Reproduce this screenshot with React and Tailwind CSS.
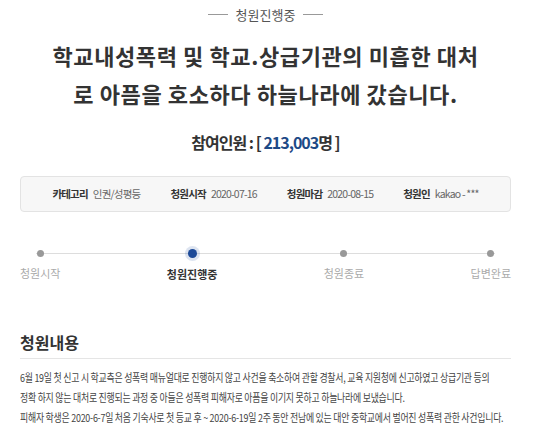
const font = { fontFamily: '"Noto Sans CJK KR", "Noto Sans", sans-serif' };

const info = [
  ["카테고리", "인권/성평등"],
  ["청원시작", "2020-07-16"],
  ["청원마감", "2020-08-15"],
  ["청원인", "kakao - ***"],
];

const steps = ["청원시작", "청원진행중", "청원종료", "답변완료"];

export default function App() {
  return (
    <div className="h-[430px] w-[559px] overflow-hidden bg-white" style={font}>
      <div className="ml-[20px] w-[491px]">
        <div className="flex items-center justify-center gap-2 pt-[5px] text-[13px] text-[#555]">
          <span className="h-px w-[20px] bg-[#999]" />
          <span>청원진행중</span>
          <span className="h-px w-[20px] bg-[#999]" />
        </div>

        <h1 className="mt-[11px] whitespace-nowrap text-center text-[22px] font-bold leading-[38px] tracking-[0.6px] text-[#333]">
          학교내성폭력 및 학교.상급기관의 미흡한 대처
          <br />로 아픔을 호소하다 하늘나라에 갔습니다.
        </h1>

        <div className="mt-[18px] whitespace-nowrap text-center text-[16px] font-bold tracking-[-1px] text-[#333]">
          참여인원 : [ <span className="text-[#1d4a86]">213,003</span>명 ]
        </div>

        <div className="mt-[22px] flex h-[36px] items-center justify-center gap-[30px] whitespace-nowrap rounded-sm border border-[#e3e3e3] bg-[#f7f7f7] text-[10.5px] tracking-[-0.8px]">
          {info.map(([k, v]) => (
            <div key={k} className="flex items-center gap-[5px]">
              <span className="font-bold text-[#333]">{k}</span>
              <span className="text-[#666]">{v}</span>
            </div>
          ))}
        </div>

        <div className="relative mt-[36px] flex justify-between">
          <span className="absolute left-[16px] right-[16px] top-[5px] h-px bg-[#ddd]" />
          {steps.map((s, i) => (
            <div key={s} className="relative flex flex-col items-center">
              {i === 1 ? (
                <span className="mt-[1px] h-[9px] w-[9px] rounded-full bg-[#1d4a98] shadow-[0_0_0_3px_rgba(29,74,152,0.15)]" />
              ) : (
                <span className="mt-[2px] h-[7px] w-[7px] rounded-full bg-[#999]" />
              )}
              <span
                className={
                  i === 1
                    ? "mt-[8px] text-[11px] font-bold text-[#333]"
                    : "mt-[8px] text-[11px] text-[#aaa]"
                }
              >
                {s}
              </span>
            </div>
          ))}
        </div>

        <h2 className="mt-[48px] text-[16px] font-bold text-[#333]">청원내용</h2>
        <div className="mt-[4px] h-px bg-[#e5e5e5]" />
        <div className="mt-[8px] overflow-hidden">
          <div className="origin-left scale-x-[0.81] whitespace-nowrap text-[11px] leading-[20px] tracking-[-0.3px] text-[#444]">
            <p>6월 19일 첫 신고 시 학교측은 성폭력 매뉴얼대로 진행하지 않고 사건을 축소하여 관할 경찰서, 교육 지원청에 신고하였고 상급기관 등의</p>
            <p>정확 하지 않는 대처로 진행되는 과정 중 아들은 성폭력 피해자로 아픔을 이기지 못하고 하늘나라에 보냈습니다.</p>
            <p>피해자 학생은 2020-6-7일 처음 기숙사로 첫 등교 후 ~ 2020-6-19일 2주 동안 전남에 있는 대안 중학교에서 벌어진 성폭력 관한 사건입니다.</p>
          </div>
        </div>
      </div>
    </div>
  );
}
